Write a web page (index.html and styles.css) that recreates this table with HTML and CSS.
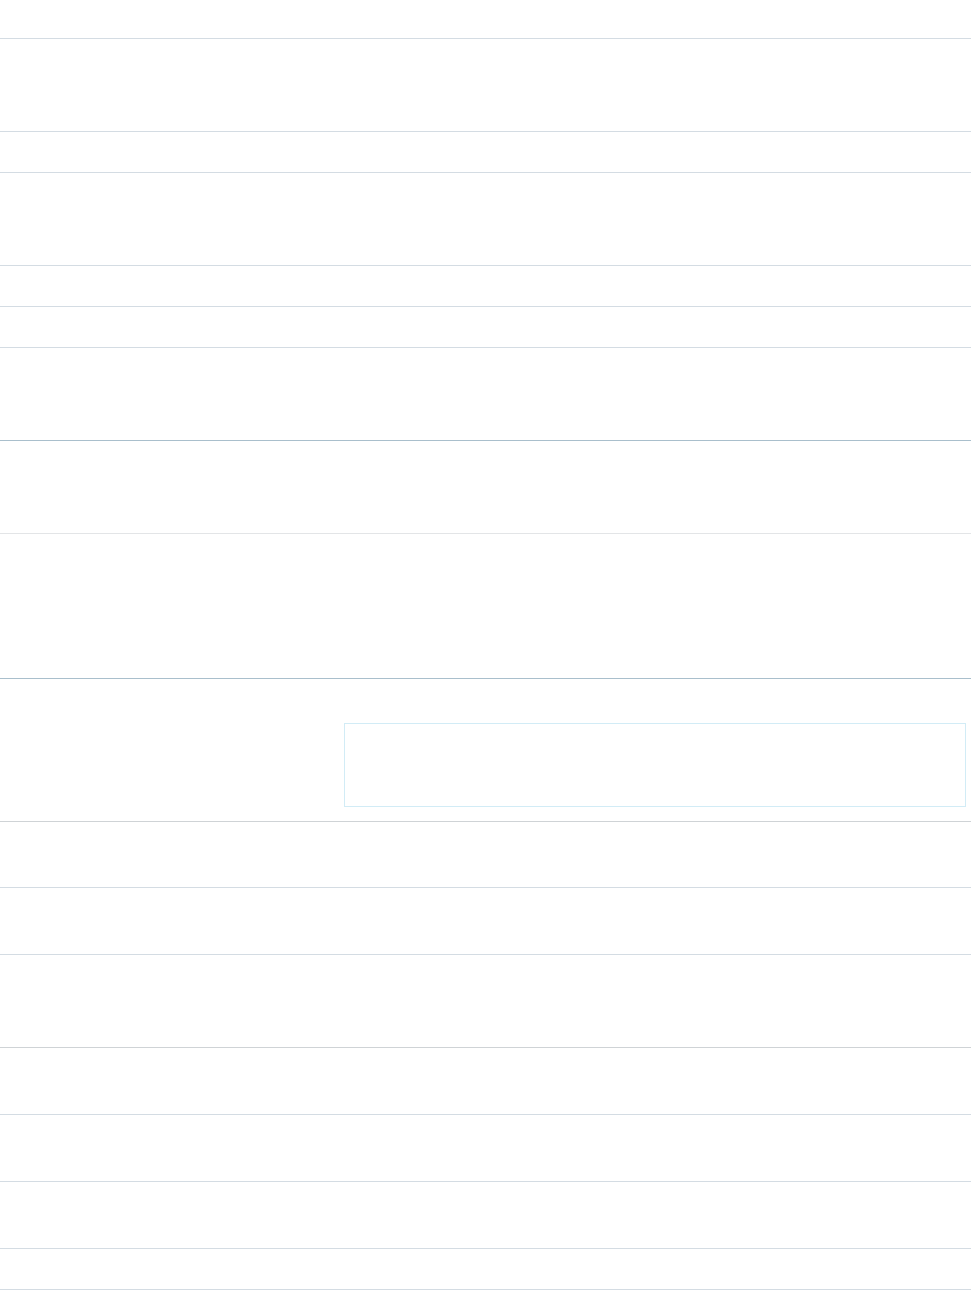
FILE: index.html
```html
<!DOCTYPE html>
<html>
<head>
<meta charset="UTF-8">
<title>Fields</title>
<link rel="stylesheet" href="styles.css">
</head>
<body>
<div class="sheet">
	<div class="head"></div>
	<div class="row tall"><div class="name"></div><div class="desc"></div></div>
	<div class="row short"><div class="name"></div><div class="desc"></div></div>
	<div class="row tall"><div class="name"></div><div class="desc"></div></div>
	<div class="row short"><div class="name"></div><div class="desc"></div></div>
	<div class="row short"><div class="name"></div><div class="desc"></div></div>
	<div class="row tall"><div class="name"></div><div class="desc"></div></div>
	<div class="row tall dark"><div class="name"></div><div class="desc"></div></div>
	<div class="row huge faint"><div class="name"></div><div class="desc"></div></div>
	<div class="row note dark">
		<div class="name"></div>
		<div class="desc"><div class="box"></div></div>
	</div>
	<div class="row mid grey"><div class="name"></div><div class="desc"></div></div>
	<div class="row mid2"><div class="name"></div><div class="desc"></div></div>
	<div class="row tall"><div class="name"></div><div class="desc"></div></div>
	<div class="row mid2 grey"><div class="name"></div><div class="desc"></div></div>
	<div class="row mid2"><div class="name"></div><div class="desc"></div></div>
	<div class="row mid2"><div class="name"></div><div class="desc"></div></div>
	<div class="row short last"><div class="name"></div><div class="desc"></div></div>
</div>
</body>
</html>
```

FILE: styles.css
```css
* {
	margin: 0;
	padding: 0;
	box-sizing: border-box;
}

body {
	background: #ffffff;
	font-family: "Liberation Sans", Arial, sans-serif;
	font-size: 13px;
	color: #16325c;
}

.sheet {
	width: 971px;
}

.head {
	height: 38px;
}

.row {
	display: grid;
	grid-template-columns: 344px 1fr;
	border-top: 1px solid #d4dce3;
}

.row.dark {
	border-top-color: #a9bfcc;
}

.row.faint {
	border-top-color: #e3e5e7;
}

.row.grey {
	border-top-color: #cfd3d6;
}

.row.last {
	border-bottom: 1px solid #d4dce3;
}

.tall { height: 93px; }
.short { height: 41px; }
.huge { height: 145px; }
.note { height: 143px; }
.mid { height: 66px; }
.mid2 { height: 67px; }
.last { height: 42px; }

.box {
	margin: 44px 5px 0 0;
	height: 84px;
	border: 1px solid #d2ecf6;
}
```
